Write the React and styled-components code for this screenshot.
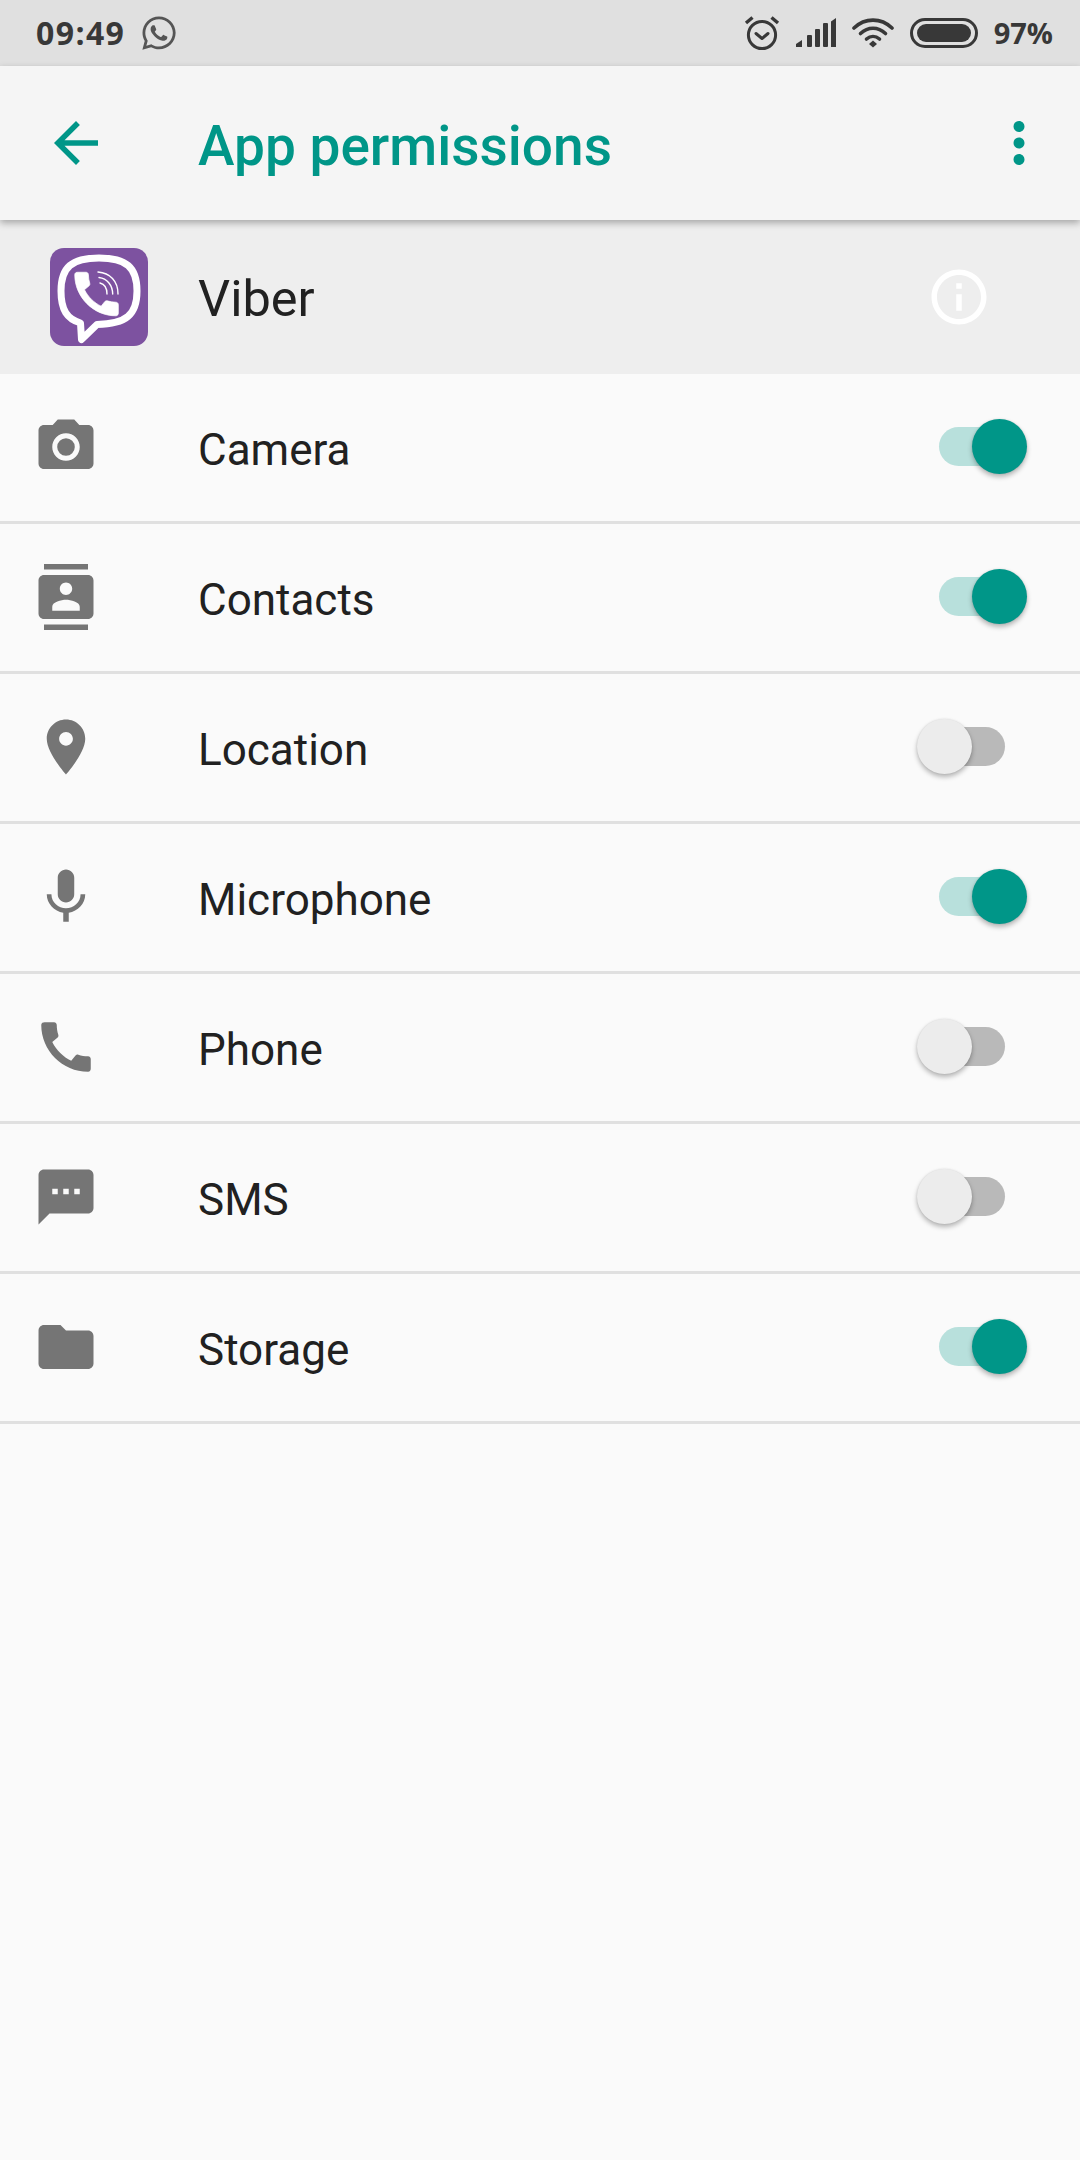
import React from "react";
import styled, { createGlobalStyle } from "styled-components";
import { FaWhatsapp } from "react-icons/fa";

const Global = createGlobalStyle`
  html, body { margin: 0; padding: 0; background: #fafafa; }
  * { box-sizing: border-box; }
`;

const Page = styled.div`
  width: 1080px;
  min-height: 2160px;
  background: #fafafa;
  font-family: Roboto, "Liberation Sans", sans-serif;
  display: flex;
  flex-direction: column;
`;

const StatusBar = styled.header`
  height: 66px;
  background: #e0e0e0;
  color: #383838;
  display: flex;
  align-items: center;
  justify-content: space-between;
  padding: 0 27px 0 36px;
`;
const StatusGroup = styled.div`
  display: flex;
  align-items: center;
  gap: ${(p) => p.$gap}px;
`;
const StatusText = styled.span`
  font-family: "Open Sans", "Liberation Sans", sans-serif;
  font-weight: 700;
  font-size: ${(p) => p.$size}px;
  line-height: 40px;
  letter-spacing: ${(p) => p.$spacing || 0}px;
  color: #383838;
`;
const ChatGlyph = styled(FaWhatsapp)`
  width: 38px;
  height: 38px;
  color: #555;
  display: block;
`;

const AppBar = styled.div`
  height: 154px;
  background: #f5f5f5;
  display: flex;
  align-items: center;
  padding: 0 28px 0 43px;
  position: relative;
  z-index: 2;
  box-shadow: 0 3px 7px rgba(0, 0, 0, 0.3);
`;
const Title = styled.h1`
  margin: 6px 0 0 89px;
  flex: 1;
  font-size: 55px;
  font-weight: 500;
  color: #009688;
  line-height: 64px;
`;
const AppRow = styled.div`
  height: 154px;
  background: #eeeeee;
  display: flex;
  align-items: center;
  padding: 0 88px 0 50px;
`;
const AppName = styled.div`
  margin: 3px 0 0 50px;
  flex: 1;
  font-size: 50.5px;
  line-height: 60px;
  color: #212121;
`;
const Row = styled.div`
  height: 150px;
  display: flex;
  align-items: center;
  padding: 0 53px 1px 33px;
  border-bottom: 3px solid #e0e0e0;
`;
const Label = styled.div`
  margin: 6px 0 0 99px;
  flex: 1;
  font-size: 44px;
  line-height: 52px;
  color: #212121;
`;
const Icon = styled.svg`
  width: 66px;
  height: 66px;
  flex: none;
  display: block;
  fill: ${(p) => p.$color || "#757575"};
`;
const SwitchBox = styled.div`
  position: relative;
  width: 110px;
  height: 39px;
  margin-bottom: 2px;
  display: flex;
  justify-content: center;
  flex: none;
`;
const Track = styled.div`
  width: 66px;
  height: 39px;
  border-radius: 20px;
  background: ${(p) => (p.$on ? "#b8e0dc" : "#b9b9b9")};
`;
const Thumb = styled.div`
  position: absolute;
  top: -8px;
  ${(p) => (p.$on ? "right: 0;" : "left: 0;")}
  width: 55px;
  height: 55px;
  border-radius: 50%;
  background: ${(p) => (p.$on ? "#009688" : "#ececec")};
  box-shadow: 0 3px 5px rgba(0, 0, 0, 0.28), 0 0 2px rgba(0, 0, 0, 0.1);
`;

const Switch = ({ on }) => (
  <SwitchBox>
    <Track $on={on} />
    <Thumb $on={on} />
  </SwitchBox>
);

const AlarmIcon = () => (
  <svg width="36" height="36" viewBox="0 0 36 36" fill="none" stroke="#383838" strokeWidth="3">
    <circle cx="18" cy="20" r="13.6" />
    <path d="M12 18.5l6 5 6-5" strokeLinecap="round" strokeLinejoin="round" />
    <path d="M2 8L8.5 2.5M27.5 2.5L34 8" strokeWidth="3.4" />
  </svg>
);
const SignalIcon = () => (
  <svg width="40" height="30" viewBox="0 0 40 30" fill="#383838">
    <path d="M0 29v-3l6-4v7z" />
    <rect x="11" y="17" width="5" height="12" rx="1" />
    <rect x="19" y="11" width="5" height="18" rx="1" />
    <rect x="27" y="5" width="5" height="24" rx="1" />
    <path d="M35 3.5L40 0v29h-5z" />
  </svg>
);
const WifiIcon = () => (
  <svg width="42" height="30" viewBox="0 0 42 30" fill="none" stroke="#383838" strokeWidth="3.6" strokeLinecap="round">
    <path d="M2 10C13-.5 29-.5 40 10" />
    <path d="M8.5 15.5c7.5-7 17.5-7 25 0" />
    <path d="M14.5 21c4-3.4 9-3.4 13 0" />
    <path d="M17 26l4-3.6 4 3.6-4 3.6z" fill="#383838" stroke="none" />
  </svg>
);
const BatteryIcon = () => (
  <svg width="68" height="30" viewBox="0 0 68 30">
    <rect x="1.5" y="1.5" width="65" height="27" rx="13.5" fill="none" stroke="#383838" strokeWidth="3" />
    <rect x="7" y="6" width="54" height="18" rx="9" fill="#383838" />
  </svg>
);
const ViberMark = styled.svg`
  width: 98px;
  height: 98px;
  display: block;
  flex: none;
`;
const ViberLogo = () => (
  <ViberMark viewBox="0 0 98 98">
    <rect width="98" height="98" rx="14" fill="#7d52a0" />
    <path
      d="M49 10C76 10 87 19 87 43C87 67 76 76 47 76.5L31.5 91.5L30.5 75C17 71 11 62 11 43C11 19 22 10 49 10Z"
      fill="none"
      stroke="#fff"
      strokeWidth="7"
      strokeLinejoin="round"
    />
    <path
      transform="translate(17.5 17) scale(2.42)"
      fill="#fff"
      stroke="#fff"
      strokeWidth="0.3"
      strokeLinejoin="round"
      d="M20.01 15.38c-1.23 0-2.42-.2-3.53-.56-.35-.12-.74-.03-1.01.24l-1.57 1.97c-2.83-1.35-5.48-3.9-6.89-6.83l1.95-1.66c.27-.28.35-.67.24-1.02-.37-1.11-.56-2.3-.56-3.53 0-.54-.45-.99-.99-.99H4.19C3.65 3 3 3.24 3 3.99 3 13.28 10.73 21 20.01 21c.71 0 .99-.63.99-1.18v-3.45c0-.54-.45-.99-.99-.99z"
    />
    <g fill="none" stroke="#fff" strokeWidth="1.4" strokeLinecap="round">
      <path d="M48 24C60 25 68 33 68 46" />
      <path d="M49 29.5C57 30.5 62.5 37 62.7 46" />
      <path d="M50 35C54 36 57 40 57 46" />
    </g>
  </ViberMark>
);

const P = {
  camera:
    "M9 2L7.17 4H4c-1.1 0-2 .9-2 2v12c0 1.1.9 2 2 2h16c1.1 0 2-.9 2-2V6c0-1.1-.9-2-2-2h-3.17L15 2H9zm3 15c-2.76 0-5-2.24-5-5s2.24-5 5-5 5 2.24 5 5-2.24 5-5 5zm0-8.2a3.2 3.2 0 1 0 0 6.4 3.2 3.2 0 0 0 0-6.4z",
  contacts:
    "M20 0H4v2h16V0zM4 24h16v-2H4v2zM20 4H4c-1.1 0-2 .9-2 2v12c0 1.1.9 2 2 2h16c1.1 0 2-.9 2-2V6c0-1.1-.9-2-2-2zm-8 2.75c1.24 0 2.25 1.01 2.25 2.25s-1.01 2.25-2.25 2.25S9.75 10.24 9.75 9 10.76 6.75 12 6.75zM17 17H7v-1.5c0-1.67 3.33-2.5 5-2.5s5 .83 5 2.5V17z",
  location:
    "M12 2C8.13 2 5 5.13 5 9c0 5.25 7 13 7 13s7-7.75 7-13c0-3.87-3.13-7-7-7zm0 9.5c-1.38 0-2.5-1.12-2.5-2.5s1.12-2.5 2.5-2.5 2.5 1.12 2.5 2.5-1.12 2.5-2.5 2.5z",
  mic: "M12 14c1.66 0 2.99-1.34 2.99-3L15 5c0-1.66-1.34-3-3-3S9 3.34 9 5v6c0 1.66 1.34 3 3 3zm5.3-3c0 3-2.54 5.1-5.3 5.1S6.7 14 6.7 11H5c0 3.41 2.72 6.23 6 6.72V21h2v-3.28c3.28-.48 6-3.3 6-6.72h-1.7z",
  phone:
    "M20.01 15.38c-1.23 0-2.42-.2-3.53-.56-.35-.12-.74-.03-1.01.24l-1.57 1.97c-2.83-1.35-5.48-3.9-6.89-6.83l1.95-1.66c.27-.28.35-.67.24-1.02-.37-1.11-.56-2.3-.56-3.53 0-.54-.45-.99-.99-.99H4.19C3.65 3 3 3.24 3 3.99 3 13.28 10.73 21 20.01 21c.71 0 .99-.63.99-1.18v-3.45c0-.54-.45-.99-.99-.99z",
  sms: "M20 2H4c-1.1 0-1.99.9-1.99 2L2 22l4-4h14c1.1 0 2-.9 2-2V4c0-1.1-.9-2-2-2zM9 11H7V9h2v2zm4 0h-2V9h2v2zm4 0h-2V9h2v2z",
  folder:
    "M10 4H4c-1.1 0-1.99.9-1.99 2L2 18c0 1.1.9 2 2 2h16c1.1 0 2-.9 2-2V8c0-1.1-.9-2-2-2h-8l-2-2z",
  back: "M20 11H7.83l5.59-5.59L12 4l-8 8 8 8 1.41-1.41L7.83 13H20v-2z",
  more: "M12 8c1.1 0 2-.9 2-2s-.9-2-2-2-2 .9-2 2 .9 2 2 2zm0 2c-1.1 0-2 .9-2 2s.9 2 2 2 2-.9 2-2-.9-2-2-2zm0 6c-1.1 0-2 .9-2 2s.9 2 2 2 2-.9 2-2-.9-2-2-2z",
  info: "M11 7h2v2h-2zm0 4h2v6h-2zm1-9C6.48 2 2 6.48 2 12s4.48 10 10 10 10-4.48 10-10S17.52 2 12 2zm0 18c-4.41 0-8-3.59-8-8s3.59-8 8-8 8 3.59 8 8-3.59 8-8 8z",
};

const perms = [
  ["Camera", P.camera, true],
  ["Contacts", P.contacts, true],
  ["Location", P.location, false],
  ["Microphone", P.mic, true],
  ["Phone", P.phone, false],
  ["SMS", P.sms, false],
  ["Storage", P.folder, true],
];

export default function App() {
  return (
    <Page>
      <Global />
      <StatusBar>
        <StatusGroup $gap={15}>
          <StatusText $size={32} $spacing={1.4}>09:49</StatusText>
          <ChatGlyph />
        </StatusGroup>
        <StatusGroup $gap={16}>
          <AlarmIcon />
          <SignalIcon />
          <WifiIcon />
          <BatteryIcon />
          <StatusText $size={29}>97%</StatusText>
        </StatusGroup>
      </StatusBar>
      <AppBar>
        <Icon viewBox="0 0 24 24" $color="#009688"><path d={P.back} /></Icon>
        <Title>App permissions</Title>
        <Icon viewBox="0 0 24 24" $color="#009688"><path d={P.more} /></Icon>
      </AppBar>
      <AppRow>
        <ViberLogo />
        <AppName>Viber</AppName>
        <Icon viewBox="0 0 24 24" $color="#ffffff"><path d={P.info} /></Icon>
      </AppRow>
      {perms.map(([name, d, on]) => (
        <Row key={name}>
          <Icon viewBox="0 0 24 24"><path d={d} fillRule="evenodd" /></Icon>
          <Label>{name}</Label>
          <Switch on={on} />
        </Row>
      ))}
    </Page>
  );
}
